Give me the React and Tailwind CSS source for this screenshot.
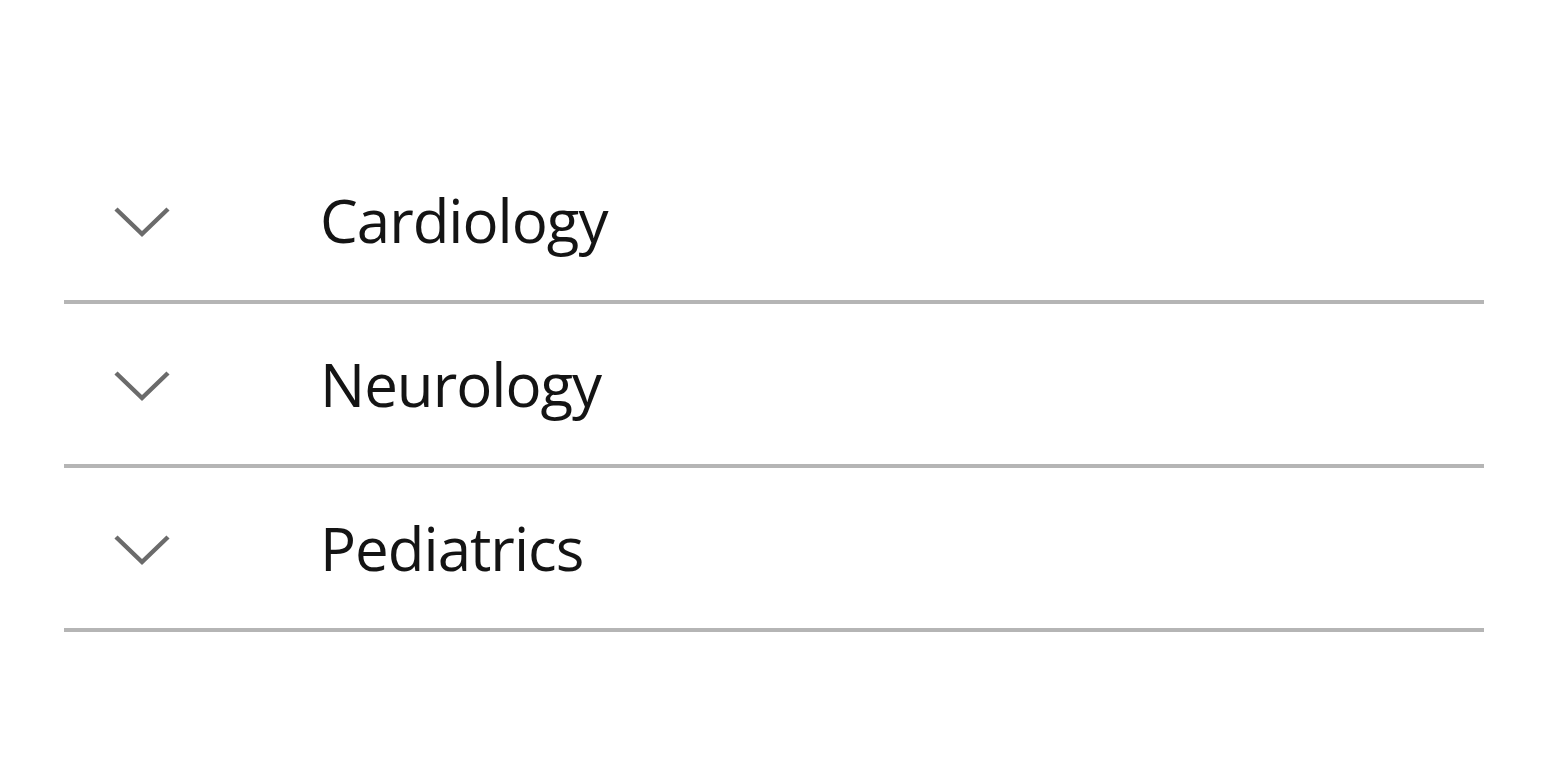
import React from "react";

const items = ["Cardiology", "Neurology", "Pediatrics"];

function Chevron() {
  return (
    <svg width="56" height="32" viewBox="0 0 56 32" className="shrink-0">
      <polyline points="2,3 28,28 54,3" fill="none" stroke="#6b6b6b" strokeWidth="4.5" />
    </svg>
  );
}

export default function App() {
  return (
    <div className="min-h-screen bg-white px-16 pt-[140px]" style={{ fontFamily: '"Open Sans", sans-serif' }}>
      <ul>
        {items.map((name) => (
          <li key={name} className="flex h-[164px] items-center border-b-4 border-[#b5b5b5]">
            <div className="ml-[50px] w-[206px] pt-[4px]">
              <Chevron />
            </div>
            <span className="text-[60px] leading-none tracking-[-1px] text-[#141414]">{name}</span>
          </li>
        ))}
      </ul>
    </div>
  );
}
